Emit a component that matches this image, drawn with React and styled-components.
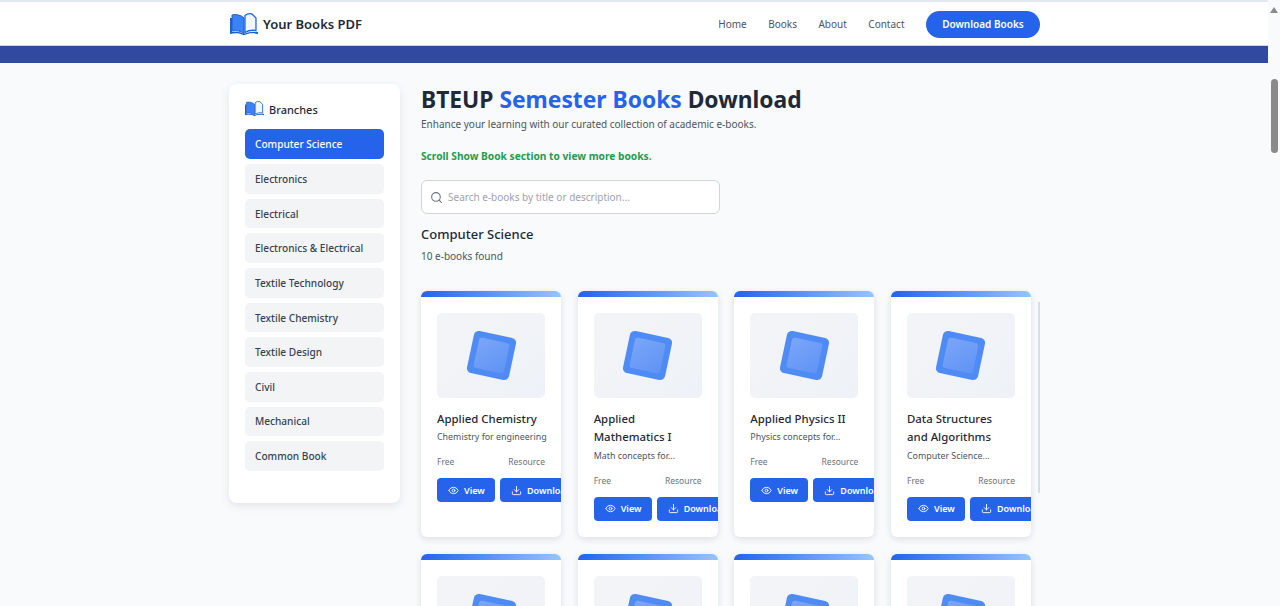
import React from 'react';
import styled, { createGlobalStyle } from 'styled-components';
import { Search, Eye, Download } from 'lucide-react';

const Global = createGlobalStyle`
  html, body { margin:0; padding:0; height:606px; overflow:hidden; }
  body { font-family:"Noto Sans",sans-serif; background:#f8fafc; color:#1f2937; }
  * { box-sizing:border-box; }
`
const Page = styled.div`
  position:relative;
  height:606px;
  overflow:hidden;
  padding-right:12px;
`
const Header = styled.header`
  height:46px;
  margin-right:-12px;
  padding-top:1px;
  background:#fff;
  border-top:2px solid #e2e8f0;
  border-bottom:1px solid #cbd5e1;
`
const HeaderInner = styled.div`
  width:811px;
  height:100%;
  margin-left:229px;
  display:flex;
  align-items:center;
  justify-content:space-between;
`
const Brand = styled.div`
  display:flex;
  align-items:center;
  gap:5px;
  padding-left:1px;
  font-size:13px;
  font-weight:600;
  color:#1f2937;
`
const Nav = styled.nav`
  display:flex;
  align-items:center;
  gap:21.5px;
`
const NavLink = styled.a`
  font-size:10px;
  color:#4b5563;
`
const CtaButton = styled.button`
  height:27px;
  width:114px;
  border:0;
  border-radius:14px;
  background:#2563eb;
  color:#fff;
  font:600 10px "Noto Sans",sans-serif;
`
const Band = styled.div`
  height:17px;
  background:#2f4aa0;
`
const Layout = styled.div`
  width:811px;
  margin:21px 0 0 229px;
  display:flex;
  gap:21px;
  align-items:flex-start;
`
const Sidebar = styled.aside`
  width:171px;
  flex:none;
  padding:16px;
  height:419px;
  background:#fff;
  border-radius:8px;
  box-shadow:0 3px 10px rgba(15,23,42,.09);
`
const SideTitle = styled.div`
  display:flex;
  align-items:center;
  gap:5px;
  height:18px;
  margin-bottom:11.4px;
  font-size:11px;
  font-weight:500;
`
const BranchList = styled.div`
  display:flex;
  flex-direction:column;
  gap:5px;
`
const Branch = styled.div`
  height:29.67px;
  padding:0 10px;
  display:flex;
  align-items:center;
  border-radius:5px;
  font-size:10.1px;
  font-weight:500;
  color:${p => p.$active ? '#fff' : '#374151'};
  background:${p => p.$active ? '#2563eb' : '#f3f4f6'};
`
const Main = styled.main`
  flex:1;
  min-width:0;
`
const Title = styled.h1`
  margin:0;
  height:31px;
  line-height:31px;
  font-size:22.8px;
  font-weight:700;
  color:#1f2937;
  span { color:#2563eb; }
`
const Sub = styled.p`
  margin:2px 0 0;
  font-size:10px;
  line-height:15px;
  color:#4b5563;
`
const Hint = styled.p`
  margin:17px 0 0;
  font-size:10.2px;
  line-height:15px;
  font-weight:700;
  color:#1f9d4d;
`
const SearchBox = styled.div`
  width:299px;
  height:34px;
  margin-top:16px;
  padding:0 8px;
  display:flex;
  align-items:center;
  gap:5px;
  background:#fff;
  border:1px solid #d1d5db;
  border-radius:6px;
  font-size:10px;
  color:#9ca3af;
`
const SectionTitle = styled.h2`
  margin:11px 0 0;
  font-size:13px;
  line-height:18px;
  font-weight:500;
  color:#1f2937;
`
const Count = styled.p`
  margin:6px 0 0;
  font-size:10px;
  line-height:15px;
  color:#4b5563;
`
const Shelf = styled.div`
  position:relative;
  height:400px;
  margin-top:27px;
`
const Grid = styled.div`
  display:grid;
  grid-template-columns:repeat(4,140px);
  column-gap:16.67px;
  row-gap:17px;
`
const Card = styled.article`
  height:246px;
  background:#fff;
  border-radius:6px;
  overflow:hidden;
  box-shadow:0 2px 7px rgba(15,23,42,.12);
`
const Strip = styled.div`
  height:6px;
  background:linear-gradient(90deg,#2563eb,#93c5fd);
`
const CardBody = styled.div`
  padding:16px 16px 0;
`
const Cover = styled.div`
  width:108px;
  height:85px;
  display:flex;
  align-items:center;
  justify-content:center;
  border-radius:5px;
  background:linear-gradient(135deg,#f3f4f6,#eef2f8);
`
const Tile = styled.div`
  width:43px;
  height:43px;
  padding:6px;
  border-radius:5px;
  background:#4f8bf5;
  transform:rotate(12deg);
  div {
    width:100%;
    height:100%;
    border-radius:3px;
    background:linear-gradient(135deg,#7ba6f8,#5f93f5);
  }
`
const BookName = styled.h3`
  margin:12px 0 0;
  font-size:11.4px;
  line-height:18.3px;
  font-weight:500;
  color:#1f2937;
`
const Desc = styled.p`
  margin:2px 0 0;
  font-size:8.9px;
  line-height:14px;
  color:#4b5563;
  white-space:nowrap;
`
const Meta = styled.div`
  margin-top:11px;
  display:flex;
  justify-content:space-between;
  font-size:8.5px;
  line-height:14px;
  color:#6b7280;
`
const Actions = styled.div`
  margin-top:9px;
  display:flex;
  gap:5px;
`
const ActionButton = styled.button`
  flex:none;
  width:${p => p.$wide ? '100px' : '58px'};
  height:24px;
  padding:0 0 0 11px;
  display:flex;
  align-items:center;
  gap:5px;
  border:0;
  border-radius:4px;
  background:#2563eb;
  color:#fff;
  font:600 9px "Noto Sans",sans-serif;
`
const ShelfBar = styled.div`
  position:absolute;
  left:617px;
  top:11px;
  width:2px;
  height:191px;
  background:#d5dfec;
`
const ScrollTrack = styled.div`
  position:absolute;
  right:0;
  top:0;
  width:12px;
  height:606px;
  background:#f8fafc;
`
const ScrollArrow = styled.div`
  position:absolute;
  top:7px;
  left:2px;
  border-left:4px solid transparent;
  border-right:4px solid transparent;
  border-bottom:6px solid #8a8a8a;
`
const ScrollThumb = styled.div`
  position:absolute;
  top:79px;
  left:3px;
  width:7px;
  height:74px;
  border-radius:4px;
  background:#8a8a8a;
`

const BookIcon = ({ size }) => (
  <svg width={size} height={size * 0.82} viewBox="0 0 28 23">
    <path d="M14 5 C11 2 6 1 2 2 V18 C6 17 11 18 14 21 Z" fill="#3b82f6" stroke="#1d5fc9" strokeWidth="1" />
    <path d="M0 5 V21 C5 20 10 20 14 22.5 C18 20 23 20 28 21 V19 C23 18.500 18 19 14 21 C10 18.500 5 18.500 2 19 V5 Z" fill="#1d5fc9" />
    <path d="M15 2.500 C17 0.800 20 0.500 22 1 L26 5 V17.500 C22 17 18 17.500 15 19.500 Z" fill="#eff6ff" stroke="#2563eb" strokeWidth="1.300" />
  </svg>
)

const branches = ['Computer Science','Electronics','Electrical','Electronics & Electrical','Textile Technology','Textile Chemistry','Textile Design','Civil','Mechanical','Common Book']
const books = [
  { name:'Applied Chemistry', desc:'Chemistry for engineering' },
  { name:'Applied Mathematics I', desc:'Math concepts for...' },
  { name:'Applied Physics II', desc:'Physics concepts for...' },
  { name:'Data Structures and Algorithms', desc:'Computer Science...' },
  { name:'Digital Electronics', desc:'Logic design basics' },
  { name:'Engineering Drawing', desc:'Drawing basics' },
  { name:'Operating Systems', desc:'Process concepts' },
  { name:'Computer Networks', desc:'Network basics' },
]

export default function App(){
  return (
    <Page>
      <Global />
      <Header>
        <HeaderInner>
          <Brand><BookIcon size={28} />Your Books PDF</Brand>
          <Nav>
            <NavLink>Home</NavLink>
            <NavLink>Books</NavLink>
            <NavLink>About</NavLink>
            <NavLink>Contact</NavLink>
            <CtaButton>Download Books</CtaButton>
          </Nav>
        </HeaderInner>
      </Header>
      <Band />
      <Layout>
        <Sidebar>
          <SideTitle><BookIcon size={19} />Branches</SideTitle>
          <BranchList>
            {branches.map((b,i)=><Branch key={b} $active={i===0}>{b}</Branch>)}
          </BranchList>
        </Sidebar>
        <Main>
          <Title>BTEUP <span>Semester Books</span> Download</Title>
          <Sub>Enhance your learning with our curated collection of academic e-books.</Sub>
          <Hint>Scroll Show Book section to view more books.</Hint>
          <SearchBox><Search size={13} color="#6b7280" />Search e-books by title or description...</SearchBox>
          <SectionTitle>Computer Science</SectionTitle>
          <Count>10 e-books found</Count>
          <Shelf>
            <Grid>
              {books.map(b=>(
                <Card key={b.name}>
                  <Strip />
                  <CardBody>
                    <Cover><Tile><div /></Tile></Cover>
                    <BookName>{b.name}</BookName>
                    <Desc>{b.desc}</Desc>
                    <Meta><span>Free</span><span>Resource</span></Meta>
                    <Actions>
                      <ActionButton><Eye size={11} />View</ActionButton>
                      <ActionButton $wide><Download size={11} />Download</ActionButton>
                    </Actions>
                  </CardBody>
                </Card>
              ))}
            </Grid>
            <ShelfBar />
          </Shelf>
        </Main>
      </Layout>
      <ScrollTrack><ScrollArrow /><ScrollThumb /></ScrollTrack>
    </Page>
  );
}
